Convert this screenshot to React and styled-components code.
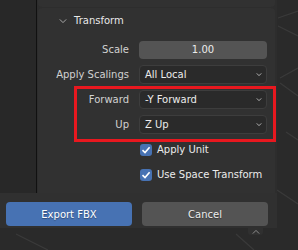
import React from 'react';
import styled, { createGlobalStyle } from 'styled-components';

const GlobalStyle = createGlobalStyle`
  body {
    margin: 0;
    background: #2a2a2a;
    font-family: "DejaVu Sans", "Liberation Sans", sans-serif;
  }
`;

const Screen = styled.div`
  position: relative;
  width: 298px;
  height: 250px;
  overflow: hidden;
  background: #2a2a2a;
`;

const Lines = styled.svg`
  position: absolute;
  inset: 0;
`;

const Dialog = styled.div`
  position: relative;
  width: 277px;
  display: flex;
  flex-direction: column;
`;

const Main = styled.div`
  display: flex;
  height: 193px;
`;

const FileList = styled.div`
  width: 36px;
  background: #282828;
`;

const Divider = styled.div`
  width: 1px;
  background: #111111;
`;

const Sidebar = styled.div`
  flex: 1;
  display: flex;
  flex-direction: column;
  gap: 1px;
  padding: 0 2px 0 1px;
  background: #2d2d2d;
  overflow: hidden;
`;

const PanelStub = styled.div`
  height: 7px;
  background: #313131;
  border-radius: 0 0 4px 4px;
`;

const Panel = styled.div`
  flex: 1;
  background: #313131;
  border-radius: 4px 4px 0 0;
`;

const Header = styled.div`
  height: 25px;
  display: flex;
  align-items: center;
  gap: 7px;
  padding-left: 21px;
  color: #e8e8e8;
  font-size: 10px;
`;

const Body = styled.div`
  display: flex;
  flex-direction: column;
  gap: 6px;
  padding-top: 7px;
`;

const Group = styled.div`
  position: relative;
  display: flex;
  flex-direction: column;
  gap: 6px;

  &::before {
    content: '';
    position: absolute;
    left: 36px;
    right: -1px;
    top: -4px;
    bottom: -8px;
    border: 3px solid #e8181f;
  }
`;

const Row = styled.div`
  display: grid;
  grid-template-columns: 91px 128px;
  column-gap: 10px;
  height: 19px;
  align-items: center;
`;

const Label = styled.div`
  text-align: right;
  color: #d2d2d2;
  font-size: 10px;
  white-space: nowrap;
`;

const NumField = styled.div`
  height: 18px;
  border-radius: 4px;
  background: #545454;
  color: #ececec;
  font-size: 10px;
  display: flex;
  align-items: center;
  justify-content: center;
`;

const Select = styled.div`
  height: 17px;
  border-radius: 4px;
  background: #2a2a2a;
  border: 1px solid #3d3d3d;
  color: #ececec;
  font-size: 10px;
  display: flex;
  align-items: center;
  justify-content: space-between;
  padding: 0 4px 0 5px;
`;

const CheckRow = styled.label`
  display: flex;
  align-items: center;
  gap: 5px;
  height: 19px;
  padding-left: 102px;
  color: #ececec;
  font-size: 10px;
`;

const Box = styled.span`
  width: 12px;
  height: 12px;
  border-radius: 3px;
  background: #4772b3;
  display: flex;
  align-items: center;
  justify-content: center;
`;

const Bar = styled.div`
  position: relative;
  height: 35px;
  display: flex;
  gap: 10px;
  padding: 9px 0 0 6px;
  box-sizing: border-box;
  background: #303030;
`;

const Button = styled.div`
  width: 126px;
  height: 24px;
  border-radius: 4px;
  background: ${(p) => (p.$primary ? '#4772b3' : '#545454')};
  color: ${(p) => (p.$primary ? '#ffffff' : '#ececec')};
  font-size: 10px;
  text-shadow: 0 1px 1px rgba(0, 0, 0, 0.35);
  display: flex;
  align-items: center;
  justify-content: center;
`;

const Tab = styled.div`
  position: absolute;
  left: 248px;
  top: 35px;
  width: 15px;
  height: 7px;
  background: #303030;
  border-radius: 0 0 3px 3px;
  display: flex;
  justify-content: center;
  align-items: center;
`;

const Chevron = ({ up, color = '#b8b8b8', w = 8, h = 4 }) => (
  <svg width={w} height={h + 2} viewBox={`-1 -1 ${w + 2} ${h + 2}`}>
    <polyline
      points={up ? `0,${h} ${w / 2},0 ${w},${h}` : `0,0 ${w / 2},${h} ${w},0`}
      fill="none"
      stroke={color}
      strokeWidth="1.1"
    />
  </svg>
);

const Check = () => (
  <svg width="10" height="10" viewBox="0 0 10 10">
    <polyline points="1.5,5.2 4,7.6 8.6,2.2" fill="none" stroke="#ffffff" strokeWidth="1.6" />
  </svg>
);

export default function App() {
  return (
    <Screen>
      <GlobalStyle />
      <Lines width="298" height="250">
        <g stroke="#3a3a3a" strokeWidth="1.2">
          <line x1="278" y1="18" x2="298" y2="11" />
          <line x1="278" y1="26" x2="298" y2="36" />
          <line x1="280" y1="78" x2="298" y2="68" />
          <line x1="280" y1="83" x2="298" y2="96" />
          <line x1="286" y1="132" x2="298" y2="140" />
          <line x1="277" y1="190" x2="298" y2="204" />
          <line x1="16" y1="234" x2="48" y2="250" />
          <line x1="236" y1="234" x2="254" y2="250" />
        </g>
      </Lines>
      <Dialog>
        <Main>
          <FileList />
          <Divider />
          <Sidebar>
            <PanelStub />
            <Panel>
              <Header>
                <Chevron />
                Transform
              </Header>
              <Body>
                <Row>
                  <Label>Scale</Label>
                  <NumField>1.00</NumField>
                </Row>
                <Row>
                  <Label>Apply Scalings</Label>
                  <Select>
                    All Local
                    <Chevron w={6} h={3} color="#d0d0d0" />
                  </Select>
                </Row>
                <Group>
                  <Row>
                    <Label>Forward</Label>
                    <Select>
                      -Y Forward
                      <Chevron w={6} h={3} color="#d0d0d0" />
                    </Select>
                  </Row>
                  <Row>
                    <Label>Up</Label>
                    <Select>
                      Z Up
                      <Chevron w={6} h={3} color="#d0d0d0" />
                    </Select>
                  </Row>
                </Group>
                <CheckRow>
                  <Box><Check /></Box>
                  Apply Unit
                </CheckRow>
                <CheckRow>
                  <Box><Check /></Box>
                  Use Space Transform
                </CheckRow>
              </Body>
            </Panel>
          </Sidebar>
        </Main>
        <Bar>
          <Button $primary>Export FBX</Button>
          <Button>Cancel</Button>
          <Tab>
            <Chevron up w={8} h={4} color="#9a9a9a" />
          </Tab>
        </Bar>
      </Dialog>
    </Screen>
  );
}
